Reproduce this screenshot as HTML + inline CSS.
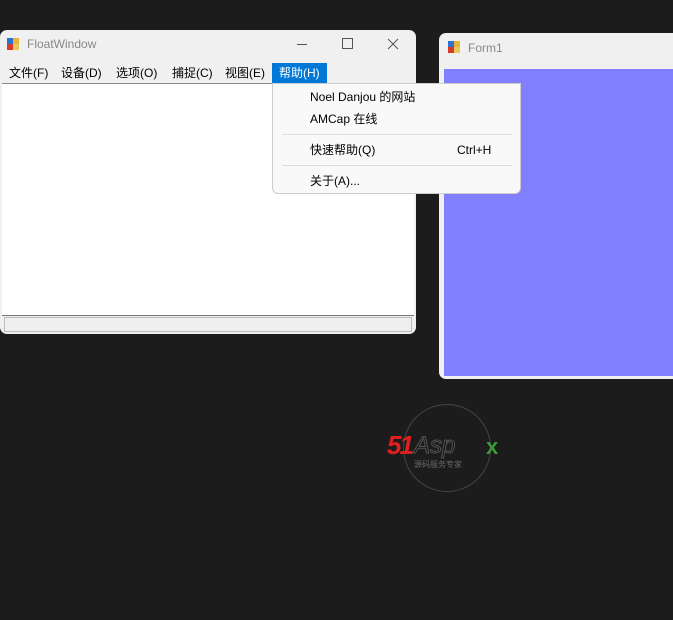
<html><head><style>
body{margin:0;width:673px;height:620px;background:#1c1c1c;position:relative;overflow:hidden;font-family:"Liberation Sans","Noto Sans CJK SC",sans-serif;}
.a{position:absolute}
.t{font-size:12px;color:#000;line-height:14px}
</style></head><body>
<div class="a" style="left:0;top:30px;width:416px;height:304px;background:#f0f0f0;border-radius:7px;overflow:hidden">
 <div class="a" style="left:7px;top:8px;width:14px;height:12px">
  <div class="a" style="left:0;top:0;width:6px;height:6px;background:#2f6fd0"></div>
  <div class="a" style="left:6px;top:0;width:6px;height:6px;background:#e8b43c"></div>
  <div class="a" style="left:0;top:6px;width:6px;height:6px;background:#d83a2a"></div>
  <div class="a" style="left:6px;top:6px;width:6px;height:6px;background:#e8c85a"></div>
 </div>
 <div class="a" style="left:27px;top:7px;font-size:12px;color:#888">FloatWindow</div>
 <div class="a" style="left:297px;top:14px;width:10px;height:1px;background:#555"></div>
 <div class="a" style="left:342px;top:8px;width:9px;height:9px;border:1px solid #555"></div>
 <svg class="a" style="left:387px;top:8px" width="12" height="12"><path d="M1 1L11 11M11 1L1 11" stroke="#555" stroke-width="1"/></svg>
 <div class="a t" style="left:9px;top:36px">文件(F)</div>
 <div class="a t" style="left:61px;top:36px">设备(D)</div>
 <div class="a t" style="left:116px;top:36px">选项(O)</div>
 <div class="a t" style="left:172px;top:36px">捕捉(C)</div>
 <div class="a t" style="left:225px;top:36px">视图(E)</div>
 <div class="a" style="left:272px;top:33px;width:55px;height:20px;background:#0078d7"></div>
 <div class="a t" style="left:279px;top:36px;color:#fff">帮助(H)</div>
 <div class="a" style="left:2px;top:53px;width:412px;height:232px;background:#fff;border-top:1px solid #888"></div>
 <div class="a" style="left:2px;top:285px;width:412px;height:1px;background:#777"></div>
 <div class="a" style="left:4px;top:287px;width:408px;height:15px;border:1px solid #bbb;box-sizing:border-box;background:#efefef"></div>
</div>
<div class="a" style="left:439px;top:33px;width:240px;height:346px;background:#f0f0f0;border-radius:7px 0 0 7px;overflow:hidden">
 <div class="a" style="left:9px;top:8px;width:12px;height:12px">
  <div class="a" style="left:0;top:0;width:6px;height:6px;background:#2f6fd0"></div>
  <div class="a" style="left:6px;top:0;width:6px;height:6px;background:#e8b43c"></div>
  <div class="a" style="left:0;top:6px;width:6px;height:6px;background:#d83a2a"></div>
  <div class="a" style="left:6px;top:6px;width:6px;height:6px;background:#e8c85a"></div>
 </div>
 <div class="a" style="left:29px;top:8px;font-size:12px;color:#888">Form1</div>
 <div class="a" style="left:5px;top:36px;width:240px;height:307px;background:#8080ff"></div>
</div>
<div class="a" style="left:272px;top:83px;width:249px;height:111px;background:#f9f9f9;border:1px solid #ccc;box-sizing:border-box;border-radius:0 0 6px 6px">
 <div class="a t" style="left:37px;top:6px">Noel Danjou 的网站</div>
 <div class="a t" style="left:37px;top:28px">AMCap 在线</div>
 <div class="a" style="left:9px;top:50px;width:230px;height:1px;background:#ddd"></div>
 <div class="a t" style="left:37px;top:59px">快速帮助(Q)</div>
 <div class="a t" style="left:184px;top:59px">Ctrl+H</div>
 <div class="a" style="left:9px;top:81px;width:230px;height:1px;background:#ddd"></div>
 <div class="a t" style="left:37px;top:90px">关于(A)...</div>
</div>
<div class="a" style="left:403px;top:404px;width:86px;height:86px;border:1px solid #444;border-radius:50%"></div>
<div class="a" style="left:387px;top:430px;font:italic bold 26px 'Liberation Sans',sans-serif;color:#e02020;letter-spacing:-2px">51</div>
<div class="a" style="left:414px;top:432px;font:italic 24px 'Liberation Sans',sans-serif;color:#111;-webkit-text-stroke:1px #555">Asp</div>
<div class="a" style="left:486px;top:434px;font:bold 22px 'Liberation Sans',sans-serif;color:#3a9a3a">x</div>
<div class="a" style="left:414px;top:459px;font-size:8px;color:#666">源码服务专家</div>
</body></html>
